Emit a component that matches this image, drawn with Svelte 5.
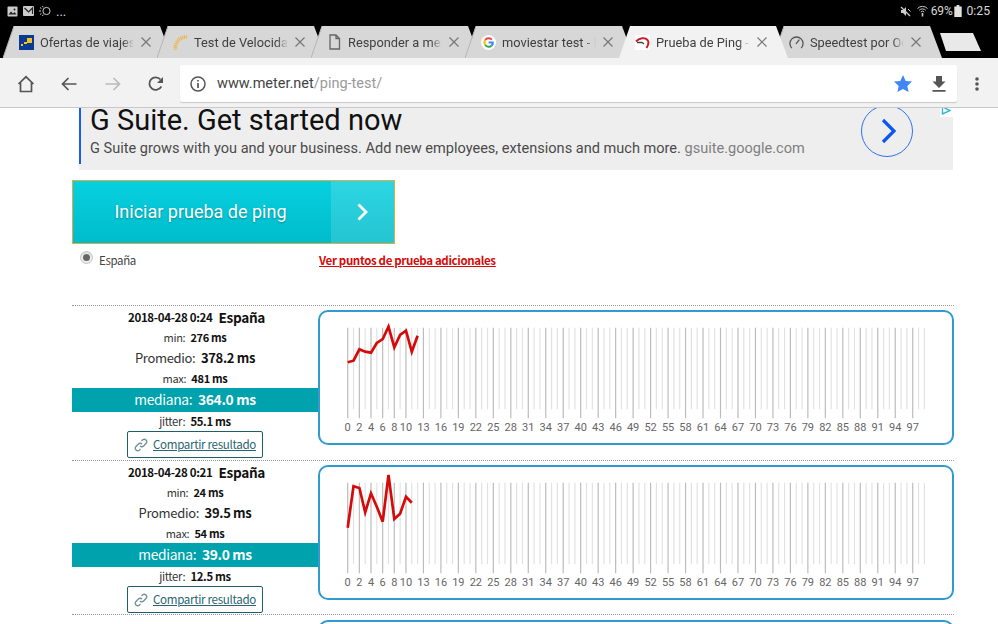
<script lang="ts">
	type Tab = { icon: string; title: string; active?: boolean };
	type Result = {
		date: string;
		min: string;
		avg: string;
		max: string;
		median: string;
		jitter: string;
		samples: number[];
	};

	const tabs: Tab[] = [
		{ icon: 'offers', title: 'Ofertas de viajes' },
		{ icon: 'spinner', title: 'Test de Velocidad' },
		{ icon: 'doc', title: 'Responder a mensaje' },
		{ icon: 'google', title: 'moviestar test - Buscar' },
		{ icon: 'meter', title: 'Prueba de Ping - velocidad', active: true },
		{ icon: 'gauge', title: 'Speedtest por Ookla' },
	];

	// y values read off the reference, in px from the top of the chart box
	const results: Result[] = [
		{
			date: '2018-04-28 0:24',
			min: '276 ms',
			avg: '378.2 ms',
			max: '481 ms',
			median: '364.0 ms',
			jitter: '55.1 ms',
			samples: [50.3, 48.7, 37.3, 39.7, 40.7, 31, 27, 14.7, 35.3, 23, 18.7, 39.7, 23.7],
		},
		{
			date: '2018-04-28 0:21',
			min: '24 ms',
			avg: '39.5 ms',
			max: '54 ms',
			median: '39.0 ms',
			jitter: '12.5 ms',
			samples: [60.7, 19.3, 21, 45.3, 26.3, 39.7, 54.7, 8, 52, 46.7, 29.7, 35.7],
		},
	];

	const STEP = 5.825;
	const X0 = 27.7;
	const slots = Array.from({ length: 100 }, (_, i) => i);
	const labelled = slots.filter((i) => (i <= 10 ? i % 2 === 0 : i >= 13 && (i - 13) % 3 === 0));

	const slotX = (i: number) => X0 + i * STEP;
	const linePoints = (samples: number[]) =>
		samples.map((y, i) => `${slotX(i).toFixed(1)},${y}`).join(' ');
</script>

<div class="screen">
	<div class="statusbar">
		<div class="status-left">
			<svg width="11" height="11" viewBox="0 0 11 11"><rect x="0.5" y="0.5" width="10" height="10" rx="1" fill="#ccc" /><path d="M1.5 8.5l2.5-3 2 2 1.5-1.5 2 2.5z" fill="#222" /><circle cx="7.5" cy="3.5" r="1" fill="#222" /></svg>
			<svg width="11" height="10" viewBox="0 0 11 10"><rect width="11" height="10" rx="1" fill="#ccc" /><path d="M1.5 2l4 4 4-4V8" fill="none" stroke="#222" stroke-width="1.2" /></svg>
			<svg width="13" height="11" viewBox="0 0 13 11" fill="none" stroke="#ccc"><circle cx="7.5" cy="5" r="3.6" /><path d="M0 5h2M1 1.5l1.5 1.2M1 8.500l1.500-1.200M3.500 0l.6 1.400M3.500 10l.6-1.400" /></svg>
			<span class="dots">...</span>
		</div>
		<div class="status-right">
			<svg width="11" height="11" viewBox="0 0 11 11"><path d="M1 4h2l3-3v9L3 7H1z" fill="#ccc" /><path d="M1 1l9 9" stroke="#ccc" stroke-width="1.2" /><path d="M8 3l2.500 2.500" stroke="#ccc" /></svg>
			<svg width="11" height="12" viewBox="0 0 11 12" fill="none" stroke="#ccc"><path d="M.5 3.500a7 7 0 0 1 10 0M2.200 5.300a4.600 4.600 0 0 1 6.600 0M3.800 7a2.300 2.300 0 0 1 3.400 0" /><path d="M5.500 8v3.500" stroke-width="1.600" /></svg>
			<span class="pct">69%</span>
			<svg width="8" height="12" viewBox="0 0 8 13"><path d="M2.500 0h3v1.500H8V13H0V1.500h2.500z" fill="#e2e2e2" /></svg>
			<span class="clock">0:25</span>
		</div>
	</div>

	<div class="tabstrip">
		{#each tabs as tab}
			<div class="tab" class:active={tab.active}>
				<svg class="tab-shape" viewBox="0 0 169 32" preserveAspectRatio="none">
					<path class="tab-fill" d="M0 32 L11 0 H157 L169 32Z" />
					<path class="tab-edge" d="M0 32 L11 0" />
				</svg>
				<span class="fav">
					{#if tab.icon === 'offers'}
						<svg width="15" height="15" viewBox="0 0 15 15"><rect width="15" height="15" fill="#0b3a94" /><rect x="8" y="3" width="5" height="5" fill="#f6c21c" /><rect x="5" y="7" width="3" height="2" fill="#f6c21c" /><rect x="2" y="9" width="2" height="2" fill="#f6c21c" /></svg>
					{:else if tab.icon === 'spinner'}
						<svg width="15" height="15" viewBox="0 0 15 15" fill="none"><path d="M2.500 14.500A11 11 0 0 1 14.500 2" stroke="#eeb33a" stroke-width="3.500" stroke-dasharray="1 .8" /></svg>
					{:else if tab.icon === 'doc'}
						<svg width="15" height="16" viewBox="0 0 15 16" fill="none" stroke="#666" stroke-width="1.3"><path d="M3 1h6l3.500 3.500V15H3zM9 1v3.500h3.500" /></svg>
					{:else if tab.icon === 'google'}
						<svg width="15" height="15" viewBox="0 0 15 15" fill="none" stroke-width="2"><circle cx="7.500" cy="7.500" r="7.500" fill="#fff" /><path d="M10.800 4.600A4.300 4.300 0 0 0 4.300 5" stroke="#ea4335" /><path d="M4.300 5a4.300 4.300 0 0 0 0 5" stroke="#fbbc05" /><path d="M4.300 10a4.300 4.300 0 0 0 6.200.8" stroke="#34a853" /><path d="M10.500 10.800A4 4 0 0 0 11.800 7.500H7.600" stroke="#4285f4" /></svg>
					{:else if tab.icon === 'meter'}
						<svg width="15" height="15" viewBox="0 0 15 15" fill="none"><rect width="15" height="15" fill="#fff" /><path d="M1 6.500C4 3 10 2 12.500 5c1.500 2 1 5-1 8" stroke="#c62026" stroke-width="2" /><path d="M2 7.500h5l2 1.500" stroke="#444" stroke-width="1.300" /></svg>
					{:else}
						<svg width="16" height="15" viewBox="0 0 16 15" fill="none" stroke="#555" stroke-width="1.400"><path d="M3 13.500a7 7 0 1 1 10 0" /><path d="M7.500 9L11 4.500" /></svg>
					{/if}
				</span>
				<span class="tab-title">{tab.title}</span>
				<svg class="tab-close" width="10" height="10" viewBox="0 0 10 10"><path d="M.5.500l9 9M9.500.500l-9 9" stroke="#777" stroke-width="1.200" /></svg>
			</div>
		{/each}
		<svg class="newtab" width="42" height="18" viewBox="0 0 42 18"><path d="M0 0H33L41 18H6Z" fill="#e9e9e9" /></svg>
	</div>

	<div class="toolbar">
		<svg class="tb-btn home" width="18" height="18" viewBox="0 0 18 18" fill="none" stroke="#555" stroke-width="1.700"><path d="M1.500 9L9 1.800 16.500 9M3.500 7.500V16.500H14.500V7.500" /></svg>
		<svg class="tb-btn back" width="16" height="14" viewBox="0 0 16 14" fill="none" stroke="#555" stroke-width="1.700"><path d="M15.500 7H1.500M7.500 1l-6 6 6 6" /></svg>
		<svg class="tb-btn forward" width="16" height="14" viewBox="0 0 16 14" fill="none" stroke="#bbb" stroke-width="1.700"><path d="M.5 7h14M8.500 1l6 6-6 6" /></svg>
		<svg class="tb-btn reload" width="16" height="16" viewBox="0 0 16 16" fill="none"><path d="M13.300 10.500A6.300 6.300 0 1 1 12.500 3.500" stroke="#555" stroke-width="1.800" /><path d="M15 1v6H9z" fill="#555" /></svg>
		<div class="omnibox">
			<svg class="info" width="16" height="16" viewBox="0 0 16 16" fill="none" stroke="#555" stroke-width="1.500"><circle cx="8" cy="8" r="7" /><path d="M8 7v5M8 4v1.600" stroke-width="1.700" /></svg>
			<span class="url"><span class="host">www.meter.net</span>/ping-test/</span>
			<svg class="star" width="18" height="17" viewBox="0 0 18 17"><path d="M9 0l2.700 5.900 6.300.7-4.700 4.300 1.300 6.100L9 14l-5.600 3 1.300-6.100L0 6.600l6.300-.7z" fill="#4285f4" /></svg>
			<svg class="download" width="14" height="16" viewBox="0 0 14 16"><path d="M4 0h6v5.500h3.500L7 12 .5 5.500H4zM.500 14h13v1.800H.5z" fill="#555" /></svg>
		</div>
		<svg class="tb-btn menu" width="4" height="14" viewBox="0 0 4 14" fill="#555"><circle cx="2" cy="2" r="1.800" /><circle cx="2" cy="7" r="1.800" /><circle cx="2" cy="12" r="1.800" /></svg>
	</div>

	<main class="page">
		<section class="ad">
			<div class="ad-copy">
				<h2>G Suite. Get started now</h2>
				<p>G Suite grows with you and your business. Add new employees, extensions and much more. <span>gsuite.google.com</span></p>
			</div>
			<div class="ad-go">
				<svg width="16" height="26" viewBox="0 0 16 26" fill="none"><path d="M2 2l11 11L2 24" stroke="#0b57f5" stroke-width="3.200" /></svg>
			</div>
			<div class="ad-choice">
				<svg width="11" height="7" viewBox="0 0 11 7" fill="none" stroke="#3ab4d4" stroke-width="1.400"><path d="M1.500 0v6L9 2.500 3.500 0" /></svg>
			</div>
		</section>

		<button type="button" class="start">
			<span class="start-label">Iniciar prueba de ping</span>
			<span class="start-arrow">
				<svg width="13" height="18" viewBox="0 0 13 18" fill="none"><path d="M2.500 1.500l7.500 7.500-7.500 7.500" stroke="#fff" stroke-width="2.800" /></svg>
			</span>
		</button>

		<div class="location">
			<label class="radio-row">
				<span class="radio"><span></span></span>
				España
			</label>
			<a href="#puntos" class="more">Ver puntos de prueba adicionales</a>
		</div>

		{#each results as r}
			<article class="result">
				<div class="stats">
					<div class="when"><b class="date">{r.date}</b><b class="place">España</b></div>
					<div class="line small">min: <b>{r.min}</b></div>
					<div class="line avg">Promedio: <b>{r.avg}</b></div>
					<div class="line max small">max: <b>{r.max}</b></div>
					<div class="median">mediana: <b>{r.median}</b></div>
					<div class="line jitter">jitter: <b>{r.jitter}</b></div>
					<a href="#compartir" class="share">
						<svg width="14" height="14" viewBox="0 0 14 14" fill="none" stroke="#6f9098" stroke-width="1.300"><path d="M6 8a2.500 2.500 0 0 0 3.600 0l2.600-2.700a2.500 2.500 0 0 0-3.500-3.500L7.500 3" /><path d="M8 6a2.500 2.500 0 0 0-3.600 0L1.800 8.700a2.500 2.500 0 0 0 3.500 3.500L6.500 11" /></svg>
						<span>Compartir resultado</span>
					</a>
				</div>
				<div class="chart">
					<svg width="632" height="131" viewBox="0 0 632 131">
						{#each slots as i}
							{#if labelled.includes(i)}
								<line x1={slotX(i)} x2={slotX(i)} y1="15.700" y2="106.300" stroke="#bcbcbc" stroke-width="1.200" />
							{:else}
								<line x1={slotX(i)} x2={slotX(i)} y1="15.700" y2="97.300" stroke="#e2e2e2" stroke-width="1.200" />
							{/if}
						{/each}
						{#each labelled as i}
							<text x={slotX(i)} y="118.500" text-anchor="middle">{i}</text>
						{/each}
						<polyline points={linePoints(r.samples)} fill="none" stroke="#d50a0a" stroke-width="2.700" />
					</svg>
				</div>
			</article>
		{/each}

		<article class="result last">
			<div class="stats">
				<div class="when"><b class="date">2018-04-28 0:19</b><b class="place">España</b></div>
			</div>
			<div class="chart"></div>
		</article>
	</main>
</div>

<style>
	:global(body) {
		background: #fff;
	}
	.screen {
		width: 998px;
		height: 624px;
		overflow: hidden;
		display: flex;
		flex-direction: column;
		background: #fff;
		font-family: "Noto Sans CJK SC", "Noto Sans", sans-serif;
	}

	/* status bar */
	.statusbar {
		height: 26px;
		flex: none;
		background: #000;
		color: #d8d8d8;
		display: flex;
		justify-content: space-between;
		align-items: center;
		padding: 0 8px 4px 7px;
		box-sizing: border-box;
		font-family: Roboto, sans-serif;
	}
	.status-left,
	.status-right {
		display: flex;
		align-items: center;
	}
	.status-left { gap: 5px; }
	.dots {
		font-size: 13px;
		line-height: 10px;
		margin-left: -1px;
		margin-top: 2px;
	}
	.status-right svg:nth-child(2) { margin-left: 6px; }
	.pct {
		font-size: 12px;
		letter-spacing: -0.2px;
		margin-left: 3px;
		margin-right: 2px;
	}
	.clock {
		font-size: 12.200px;
		margin-left: 4px;
	}

	/* tabs */
	.tabstrip {
		height: 32px;
		flex: none;
		background: #000;
		display: flex;
		padding-left: 3px;
		position: relative;
	}
	.tab {
		position: relative;
		width: 169px;
		height: 32px;
		margin-right: -15px;
		flex: none;
		display: flex;
		align-items: center;
		box-sizing: border-box;
		padding: 0 21px 0 16px;
		font-family: Roboto, sans-serif;
		font-size: 12.800px;
		color: #3f3f3f;
	}
	.tab.active {
		z-index: 2;
	}
	.tab-shape {
		position: absolute;
		inset: 0;
		width: 100%;
		height: 100%;
	}
	.tab-fill { fill: #d7d7d7; }
	.tab-edge { stroke: #b5b5b5; stroke-width: 1; fill: none; }
	.tab.active .tab-fill { fill: #f2f2f2; }
	.tab.active .tab-edge { stroke: none; }
	.fav {
		position: relative;
		width: 15px;
		height: 16px;
		flex: none;
		display: flex;
		align-items: center;
	}
	.tab-title {
		position: relative;
		flex: 1;
		min-width: 0;
		margin: 0 7px 0 6px;
		white-space: nowrap;
		overflow: hidden;
		-webkit-mask-image: linear-gradient(to right, #000 88%, transparent 100%);
		mask-image: linear-gradient(to right, #000 88%, transparent 100%);
	}
	.tab-close {
		position: relative;
		flex: none;
	}
	.newtab {
		flex: none;
		margin: 7px 0 0 13px;
		position: relative;
		z-index: 3;
	}

	/* toolbar */
	.toolbar {
		height: 50px;
		flex: none;
		box-sizing: border-box;
		background: #f2f2f2;
		border-bottom: 1px solid #c9c9c9;
		padding-top: 2px;
		display: flex;
		align-items: center;
		position: relative;
		z-index: 5;
	}
	.tb-btn { flex: none; }
	.home { margin-left: 17px; }
	.back { margin-left: 26px; }
	.forward { margin-left: 28px; }
	.reload { margin-left: 27px; }
	.omnibox {
		margin-left: 16px;
		width: 777px;
		height: 37px;
		flex: none;
		box-sizing: border-box;
		background: #fff;
		border-radius: 2px;
		box-shadow: 0 1px 1px rgba(0, 0, 0, 0.18);
		display: flex;
		align-items: center;
		padding: 0 11px 0 10px;
	}
	.url {
		margin-left: 11px;
		flex: 1;
		font-family: Roboto, sans-serif;
		font-size: 14.500px;
		color: #9a9a9a;
	}
	.host { color: #444; }
	.star { margin-right: 20px; }
	.menu { margin-left: 18px; }

	/* page */
	.page {
		flex: 1;
		min-height: 0;
		padding-left: 72px;
		width: 882px;
		overflow: visible;
	}
	.ad {
		position: relative;
		margin-left: 7px;
		width: 874px;
		height: 62px;
		box-sizing: border-box;
		background: #eee;
		display: flex;
		justify-content: space-between;
		padding-right: 40px;
	}
	.ad-copy {
		border-left: 2px solid #1a5cf0;
		height: 56px;
		padding-left: 9px;
		font-family: Roboto, sans-serif;
	}
	.ad h2 {
		margin: -6px 0 1px;
		font-size: 29px;
		line-height: 36px;
		font-weight: 400;
		color: #111;
		white-space: nowrap;
	}
	.ad p {
		margin: 0;
		font-size: 14.550px;
		line-height: 20px;
		color: #4b4b4b;
		white-space: nowrap;
	}
	.ad p span { color: #808080; }
	.ad-go {
		width: 52px;
		height: 52px;
		margin-top: -3px;
		box-sizing: border-box;
		border: 1px solid #2f74f0;
		border-radius: 50%;
		display: flex;
		align-items: center;
		justify-content: center;
		padding-left: 3px;
	}
	.ad-choice {
		position: absolute;
		top: 0;
		right: 0;
		width: 13px;
		height: 9px;
		background: #fff;
		display: flex;
		justify-content: center;
	}
	.start {
		display: flex;
		width: 323px;
		height: 64px;
		margin: 10px 0 0;
		padding: 0;
		box-sizing: border-box;
		border: 1px solid #e3aa3c;
		background: linear-gradient(#07d0df, #00bccb);
		color: #fff;
		font-family: Roboto, sans-serif;
	}
	.start-label {
		width: 258px;
		height: 100%;
		padding: 0 3px 2px 0;
		box-sizing: border-box;
		display: flex;
		align-items: center;
		justify-content: center;
		font-size: 18px;
		text-shadow: 0 1px 2px rgba(0, 0, 0, 0.3);
	}
	.start-arrow {
		flex: 1;
		height: 100%;
		display: flex;
		align-items: center;
		justify-content: center;
		background: linear-gradient(#2bd6e2, #25c4d2);
	}
	.location {
		display: grid;
		grid-template-columns: 247px auto;
		align-items: center;
		height: 61px;
		align-content: start;
		padding-top: 5px;
		box-sizing: border-box;
		font-size: 11.500px;
		letter-spacing: -0.03em;
		line-height: 20px;
	}
	.radio-row {
		display: flex;
		align-items: center;
		gap: 6px;
		padding: 1px 0 0 8px;
		color: #444;
	}
	.radio {
		width: 13px;
		height: 13px;
		box-sizing: border-box;
		border-radius: 50%;
		border: 1px solid #c4c4c4;
		background: #eee;
		display: flex;
		align-items: center;
		justify-content: center;
		margin-top: -6px;
		box-shadow: inset 0 1px 1px rgba(0, 0, 0, 0.1);
	}
	.radio span {
		width: 7px;
		height: 7px;
		border-radius: 50%;
		background: #666;
	}
	.more {
		color: #d60a0a;
		font-weight: 700;
	}
	.result {
		height: 155px;
		box-sizing: border-box;
		border-top: 1px dotted #999;
		display: grid;
		grid-template-columns: 246px 636px;
	}
	.result.last {
		margin-top: -1px;
	}
	.last .chart {
		margin-top: 5px;
	}
	.last .when {
		margin-top: 5px;
	}
	.stats {
		display: flex;
		flex-direction: column;
		align-items: center;
		color: #333;
		font-size: 11px;
		line-height: 1;
		letter-spacing: -0.03em;
	}
	.stats b {
		color: #111;
		font-weight: 700;
		margin-left: 3px;
	}
	.when {
		height: 20px;
		margin-top: 2px;
		margin-bottom: 1px;
		display: flex;
		align-items: center;
		gap: 3px;
	}
	.when .date { font-size: 11.500px; }
	.when .place { font-size: 13.600px; }
	.line {
		display: flex;
		align-items: center;
		justify-content: center;
		white-space: pre;
	}
	.small { height: 16px; }
	.avg {
		height: 24px;
		font-size: 13px;
	}
	.max { height: 18px; margin-bottom: 1px; }
	.median {
		align-self: stretch;
		height: 24px;
		background: #00a3ad;
		color: #fff;
		font-size: 13.800px;
		display: flex;
		align-items: center;
		justify-content: center;
		white-space: pre;
	}
	.median b { color: #fff; }
	.jitter { height: 19px; font-size: 11.300px; }
	.share {
		width: 136px;
		height: 27px;
		box-sizing: border-box;
		border: 1px solid #1f5f6b;
		border-radius: 2px;
		display: flex;
		align-items: center;
		gap: 5px;
		padding-left: 6px;
		color: #2a6572;
		font-size: 11.600px;
		white-space: nowrap;
	}
	.share svg { flex: none; }
	.share span { text-decoration: underline; }
	.chart {
		margin-top: 4px;
		height: 135px;
		box-sizing: border-box;
		border: 2px solid #2f9bd0;
		border-radius: 10px;
		background: #fff;
	}
	.chart svg { display: block; }
	.chart text {
		font-family: Roboto, sans-serif;
		font-size: 11px;
		fill: #666;
	}
</style>
